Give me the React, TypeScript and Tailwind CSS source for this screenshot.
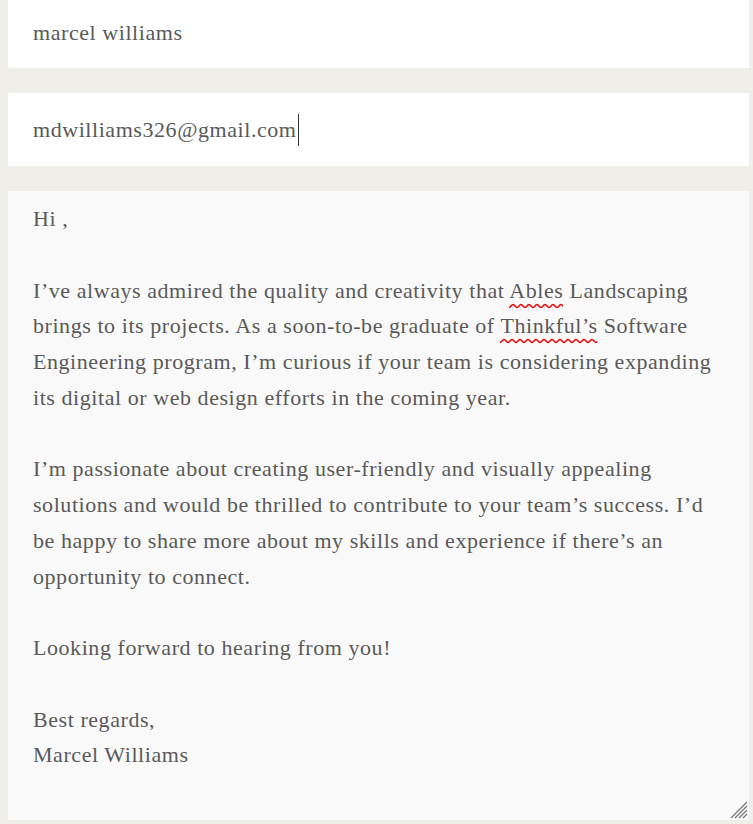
import React from "react";

const Line = ({ children }: { children?: React.ReactNode }) => (
  <div className="whitespace-nowrap h-[35.75px] leading-[35.75px]">{children ?? "\u00a0"}</div>
);

const Squiggle = ({ id, children }: { id: string; children: React.ReactNode }) => (
  <span className="relative">
    {children}
    <svg className="absolute left-0 bottom-[-6px] w-full h-[6px]">
      <defs>
        <pattern id={id} width="8" height="6" patternUnits="userSpaceOnUse">
          <path d="M0 5 Q2 0.5 4 3 T8 1" fill="none" stroke="#e60000" strokeWidth="0" />
          <path d="M0 4.5 C1.5 4.5 2.5 1.5 4 1.5 C5.5 1.5 6.5 4.5 8 4.5" fill="none" stroke="#e60000" strokeWidth="1.5" />
        </pattern>
      </defs>
      <rect x="0" y="0" width="100%" height="6" fill={`url(#${id})`} />
    </svg>
  </span>
);

export default function App() {
  return (
    <div
      className="w-[753px] h-[824px] overflow-hidden bg-[#efeee9] pl-[8px] pr-[4px] text-[#595959] text-[22px] tracking-[0.56px]"
      style={{ fontFamily: '"Liberation Serif", "DejaVu Serif", serif' }}
    >
      <div className="flex flex-col">
        <div className="-mt-[5px] h-[73px] bg-white flex items-center pl-[25px] pt-[2px]">
          marcel williams
        </div>
        <div className="mt-[25px] h-[73px] bg-white flex items-center pl-[25px]">
          <span>mdwilliams326@gmail.com</span>
          <span className="inline-block w-[1px] h-[32px] bg-[#333] ml-[1px]" />
        </div>
        <div className="relative mt-[25px] h-[629px] bg-[#f9f9f9] pl-[25px] pt-[10px]">
          <Line>Hi ,</Line>
          <Line />
          <Line>
            I’ve always admired the quality and creativity that <Squiggle id="sq1">Ables</Squiggle> Landscaping
          </Line>
          <Line>
            brings to its projects. As a soon-to-be graduate of <Squiggle id="sq2">Thinkful’s</Squiggle> Software
          </Line>
          <Line>Engineering program, I’m curious if your team is considering expanding</Line>
          <Line>its digital or web design efforts in the coming year.</Line>
          <Line />
          <Line>I’m passionate about creating user-friendly and visually appealing</Line>
          <Line>solutions and would be thrilled to contribute to your team’s success. I’d</Line>
          <Line>be happy to share more about my skills and experience if there’s an</Line>
          <Line>opportunity to connect.</Line>
          <Line />
          <Line>Looking forward to hearing from you!</Line>
          <Line />
          <Line>Best regards,</Line>
          <Line>Marcel Williams</Line>
          <svg className="absolute right-[1px] bottom-[1px]" width="18" height="18" viewBox="0 0 18 18">
            <g stroke="#7a7a7a" strokeWidth="1.3">
              <line x1="1" y1="17" x2="17" y2="1" />
              <line x1="5" y1="17" x2="17" y2="5" />
              <line x1="9" y1="17" x2="17" y2="9" />
              <line x1="13" y1="17" x2="17" y2="13" />
            </g>
          </svg>
        </div>
      </div>
    </div>
  );
}
